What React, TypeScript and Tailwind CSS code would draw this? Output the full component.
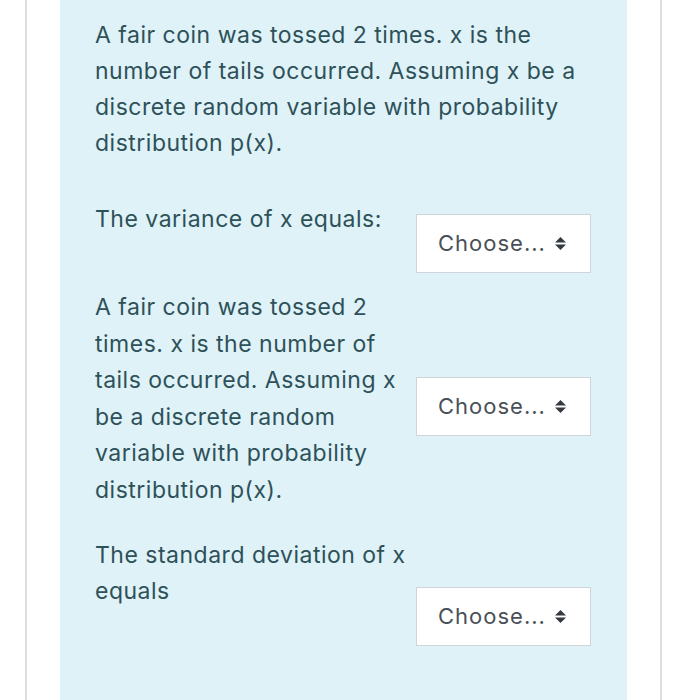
import React from "react";

const font = { fontFamily: "Inter, 'Liberation Sans', sans-serif" };

const SortIcon: React.FC = () => (
  <svg width="11" height="13" viewBox="0 0 11 13" className="shrink-0">
    <path d="M5.5 0 L11 5.5 L0 5.5 Z" fill="#343a40" />
    <path d="M0 7.5 L11 7.5 L5.5 13 Z" fill="#343a40" />
  </svg>
);

const Choose: React.FC<{ className?: string }> = ({ className = "" }) => (
  <div
    className={`flex h-[59px] w-[175px] items-center justify-between border border-[#ced4da] bg-white pl-[21px] pr-[24px] text-[22px] tracking-[1px] text-[#495057] ${className}`}
  >
    <span>Choose...</span>
    <SortIcon />
  </div>
);

export default function App() {
  return (
    <div className="min-h-[700px] bg-white px-[25px]" style={font}>
      <div className="min-h-[700px] border-x-2 border-[#dedede] px-[33px]">
        <div className="min-h-[700px] bg-[#def2f8] pb-10 pl-[35px] pr-[36px] pt-[17px] text-[23px] tracking-[0.5px] text-[#2e5159]">
          <p className="leading-[36px]">
            A fair coin was tossed 2 times. x is the number of tails occurred.
            Assuming x be a discrete random variable with probability
            distribution p(x).
          </p>

          <div className="mt-[40px] grid grid-cols-[1fr_175px] items-start gap-x-[3px]">
            <p className="leading-[36px]">The variance of x equals:</p>
            <Choose className="mt-[13px]" />
          </div>

          <div className="mt-[16px] grid grid-cols-[1fr_175px] items-start gap-x-[3px]">
            <p className="leading-[36.6px]">
              A fair coin was tossed 2 times. x is the number of tails
              occurred. Assuming x be a discrete random variable with
              probability distribution p(x).
            </p>
            <Choose className="mt-[88px]" />
          </div>

          <div className="mt-[28px] grid grid-cols-[1fr_175px] items-start gap-x-[3px]">
            <p className="leading-[36px]">The standard deviation of x equals</p>
            <Choose className="mt-[50px]" />
          </div>
        </div>
      </div>
    </div>
  );
}
